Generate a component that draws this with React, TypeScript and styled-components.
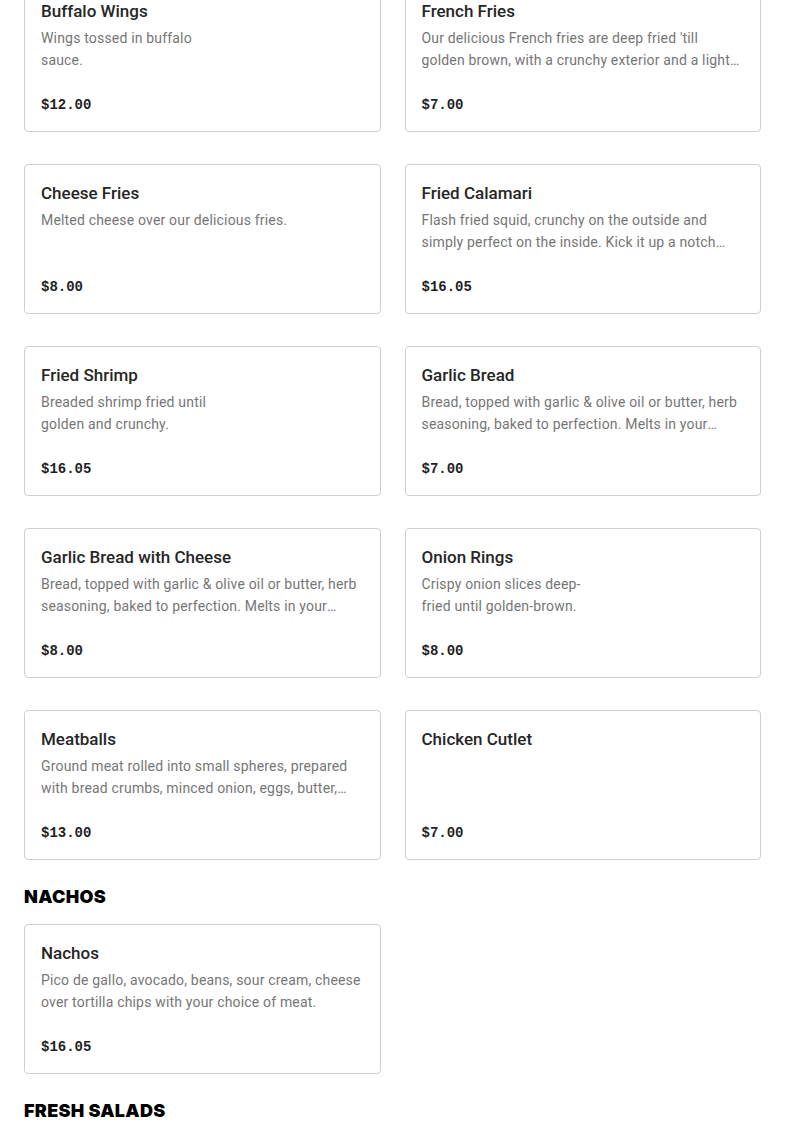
import styled, { createGlobalStyle } from 'styled-components';

const GlobalStyle = createGlobalStyle`
  body {
    margin: 0;
    background-color: #ffffff;
    font-family: 'Roboto', 'Liberation Sans', sans-serif;
  }
`;

type Item = {
  name: string;
  description?: string;
  price: string;
};

type Section = {
  title?: string;
  items: Item[];
};

const sections: Section[] = [
  {
    items: [
      { name: 'Buffalo Wings', description: 'Wings tossed in buffalo\nsauce.', price: '$12.00' },
      {
        name: 'French Fries',
        description:
          "Our delicious French fries are deep fried 'till golden brown, with a crunchy exterior and a light and fluffy interior.",
        price: '$7.00',
      },
      { name: 'Cheese Fries', description: 'Melted cheese over our delicious fries.', price: '$8.00' },
      {
        name: 'Fried Calamari',
        description:
          'Flash fried squid, crunchy on the outside and simply perfect on the inside. Kick it up a notch with our spicy marinara.',
        price: '$16.05',
      },
      { name: 'Fried Shrimp', description: 'Breaded shrimp fried until\ngolden and crunchy.', price: '$16.05' },
      {
        name: 'Garlic Bread',
        description:
          'Bread, topped with garlic & olive oil or butter, herb seasoning, baked to perfection. Melts in your mouth.',
        price: '$7.00',
      },
      {
        name: 'Garlic Bread with Cheese',
        description:
          'Bread, topped with garlic & olive oil or butter, herb seasoning, baked to perfection. Melts in your mouth.',
        price: '$8.00',
      },
      { name: 'Onion Rings', description: 'Crispy onion slices deep-\nfried until golden-brown.', price: '$8.00' },
      {
        name: 'Meatballs',
        description:
          'Ground meat rolled into small spheres, prepared with bread crumbs, minced onion, eggs, butter, and seasoning.',
        price: '$13.00',
      },
      { name: 'Chicken Cutlet', price: '$7.00' },
    ],
  },
  {
    title: 'Nachos',
    items: [
      {
        name: 'Nachos',
        description: 'Pico de gallo, avocado, beans, sour cream, cheese over tortilla chips with your choice of meat.',
        price: '$16.05',
      },
    ],
  },
  {
    title: 'Fresh Salads',
    items: [],
  },
];

const Wrapper = styled.div`
  padding: 0 24px;
  margin-top: -18px;

  display: flex;
  flex-direction: column;
  gap: 26px;
`;

const SectionGroup = styled.section`
  display: flex;
  flex-direction: column;
  gap: 16px;
`;

const SectionTitle = styled.h2`
  margin: 0;

  font-family: 'Inter', 'Liberation Sans', sans-serif;
  font-size: 18px;
  line-height: 22px;
  font-weight: 900;
  letter-spacing: 0.3px;
  text-transform: uppercase;

  color: #000000;
`;

const Grid = styled.div`
  display: grid;
  grid-template-columns: 1fr 1fr;
  column-gap: 24px;
  row-gap: 32px;
`;

const Card = styled.div`
  padding: 16px;

  display: flex;
  flex-direction: column;

  border: 1px solid #cfcfcf;
  border-radius: 4px;
  background-color: #ffffff;
`;

const Name = styled.h3`
  margin: 0;

  font-size: 17px;
  line-height: 24px;
  font-weight: 500;

  color: #262626;
`;

const Description = styled.p`
  margin: 4px 0 0;
  height: 44px;

  font-size: 14px;
  line-height: 22px;
  letter-spacing: 0.18px;
  white-space: pre-line;

  color: #767676;

  display: -webkit-box;
  -webkit-line-clamp: 2;
  -webkit-box-orient: vertical;
  overflow: hidden;
`;

const Price = styled.p`
  margin: 24px 0 0;

  font-family: 'Liberation Mono', monospace;
  font-size: 14px;
  line-height: 20px;
  font-weight: 700;

  color: #1f1f1f;
`;

function MenuCard({ item }: { item: Item }) {
  return (
    <Card>
      <Name>{item.name}</Name>
      <Description>{item.description ?? ''}</Description>
      <Price>{item.price}</Price>
    </Card>
  );
}

export default function App() {
  return (
    <>
      <GlobalStyle />
      <Wrapper>
        {sections.map((section, i) => (
          <SectionGroup key={i}>
            {section.title && <SectionTitle>{section.title}</SectionTitle>}
            {section.items.length > 0 && (
              <Grid>
                {section.items.map((item) => (
                  <MenuCard key={item.name} item={item} />
                ))}
              </Grid>
            )}
          </SectionGroup>
        ))}
      </Wrapper>
    </>
  );
}
